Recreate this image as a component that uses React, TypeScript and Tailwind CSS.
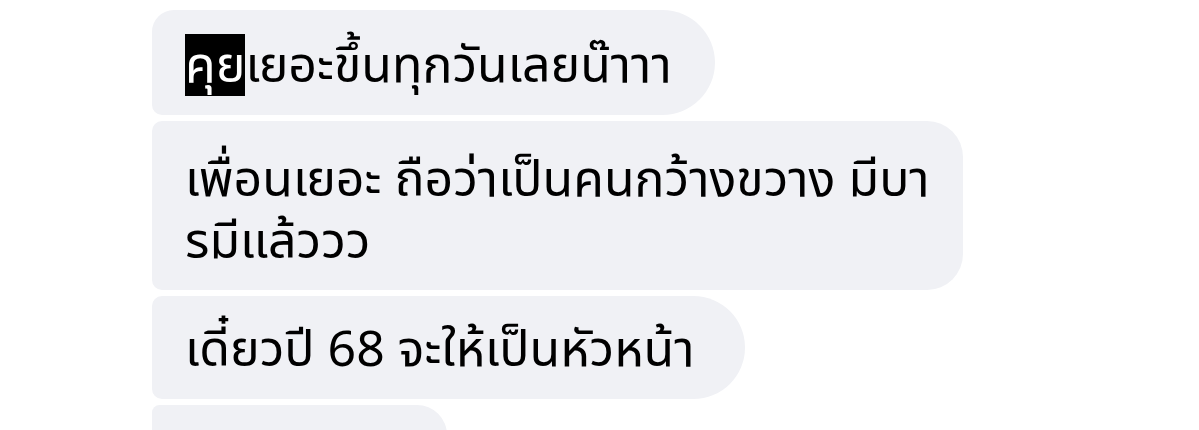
export default function App() {
  return (
    <div className="h-[430px] w-full overflow-hidden bg-white">
      <div
        className="flex flex-col items-start gap-[6px] pl-[152px] pt-[10px] text-[50px] leading-[62px] text-black"
        style={{ fontFamily: '"Noto Sans Thai", "Noto Sans Thai Looped", Garuda, Loma, "DejaVu Sans", sans-serif' }}
      >
        <div className="flex h-[105px] w-[563px] items-center rounded-r-[53px] rounded-tl-[22px] rounded-bl-[10px] bg-[#f0f1f5] pl-[33px] pt-[6px]">
          <span>
            <span className="inline-block h-[62px] bg-black leading-[66px] text-white">คุย</span>เยอะขึ้นทุกวันเลยน๊าาา
          </span>
        </div>
        <div className="flex h-[169px] w-[811px] items-center rounded-l-[10px] rounded-r-[36px] bg-[#f0f1f5] pl-[33px] pt-[12px]">
          <p>
            เพื่อนเยอะ ถือว่าเป็นคนกว้างขวาง มีบา
            <br />
            รมีแล้ววว
          </p>
        </div>
        <div className="flex h-[103px] w-[593px] items-center rounded-l-[10px] rounded-r-[52px] bg-[#f0f1f5] pl-[33px] pt-[6px]">
          <span>เดี๋ยวปี 68 จะให้เป็นหัวหน้า</span>
        </div>
        <div className="h-[60px] w-[295px] rounded-l-[10px] rounded-r-[40px] bg-[#f0f1f5]" />
      </div>
    </div>
  );
}
